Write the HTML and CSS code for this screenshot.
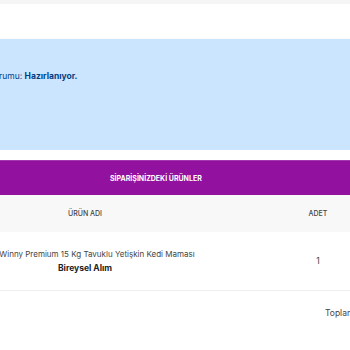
FILE: index.html
```html
<!DOCTYPE html>
<html lang="tr">

<head>
    <meta charset="UTF-8">
    <meta name="viewport" content="width=device-width, initial-scale=1.0">
    <title>Sipariş Detayı</title>
    <link rel="stylesheet" href="styles.css">
</head>

<body>
    <div class="top-bar"></div>

    <div class="page">
        <div class="alert">
            <p>Sipariş durumu: <strong>Hazırlanıyor.</strong></p>
        </div>

        <div class="order-box">
            <div class="order-title">SİPARİŞİNİZDEKİ ÜRÜNLER</div>
            <table class="order-table">
                <thead>
                    <tr>
                        <th class="col-name">ÜRÜN ADI</th>
                        <th class="col-qty">ADET</th>
                        <th class="col-price">FİYAT</th>
                    </tr>
                </thead>
                <tbody>
                    <tr>
                        <td class="col-name">
                            <span class="product-name">Winny Premium 15 Kg Tavuklu Yetişkin Kedi Maması</span>
                            <strong class="product-type">Bireysel Alım</strong>
                        </td>
                        <td class="col-qty">1</td>
                        <td class="col-price"></td>
                    </tr>
                </tbody>
                <tfoot>
                    <tr>
                        <td></td>
                        <td class="total-label" colspan="2">Toplam</td>
                    </tr>
                </tfoot>
            </table>
        </div>
    </div>
</body>

</html>
```

FILE: styles.css
```css
* {
    margin: 0;
    padding: 0;
    box-sizing: border-box;
}

html,
body {
    overflow: hidden;
}

body {
    font-family: 'Inter', 'Noto Sans', sans-serif;
    background-color: #fff;
    color: #333;
    width: 350px;
    height: 350px;
}

.top-bar {
    height: 4px;
    background-color: #f5f5f5;
}

.page {
    margin-top: 34px;
    margin-left: -100px;
    width: 520px;
    border-top: 1px solid #fbfbfb;
}

.alert {
    height: 111px;
    background-color: #cce5ff;
    color: #004085;
    padding: 32px 0 0 59px;
    font-size: 8.5px;
}

.alert strong {
    font-weight: 700;
}

.order-box {
    margin-top: 10px;
}

.order-title {
    height: 35px;
    line-height: 35px;
    background-color: #93119f;
    border-top: 1px solid #a23aad;
    color: #fff;
    font-size: 7px;
    font-weight: 700;
    padding-left: 210px;
}

.order-table {
    width: 100%;
    border-collapse: collapse;
}

.order-table th {
    height: 37px;
    background-color: #f8f8f8;
    font-size: 7px;
    font-weight: 500;
    color: #444;
}

.order-table td {
    text-align: center;
    font-size: 8.5px;
    color: #444;
}

.order-table tbody td {
    height: 58px;
    border-bottom: 1px solid #eee;
}

.col-name {
    width: 370px;
}

.col-qty {
    width: 96px;
}

.product-name {
    display: block;
    padding-left: 24px;
    margin-bottom: 4px;
    font-size: 8px;
}

.product-type {
    display: block;
    font-weight: 700;
    color: #222;
}

.order-table tfoot td {
    height: 46px;
}

.order-table .total-label {
    text-align: left;
    padding-left: 55px;
    color: #444;
}
```
